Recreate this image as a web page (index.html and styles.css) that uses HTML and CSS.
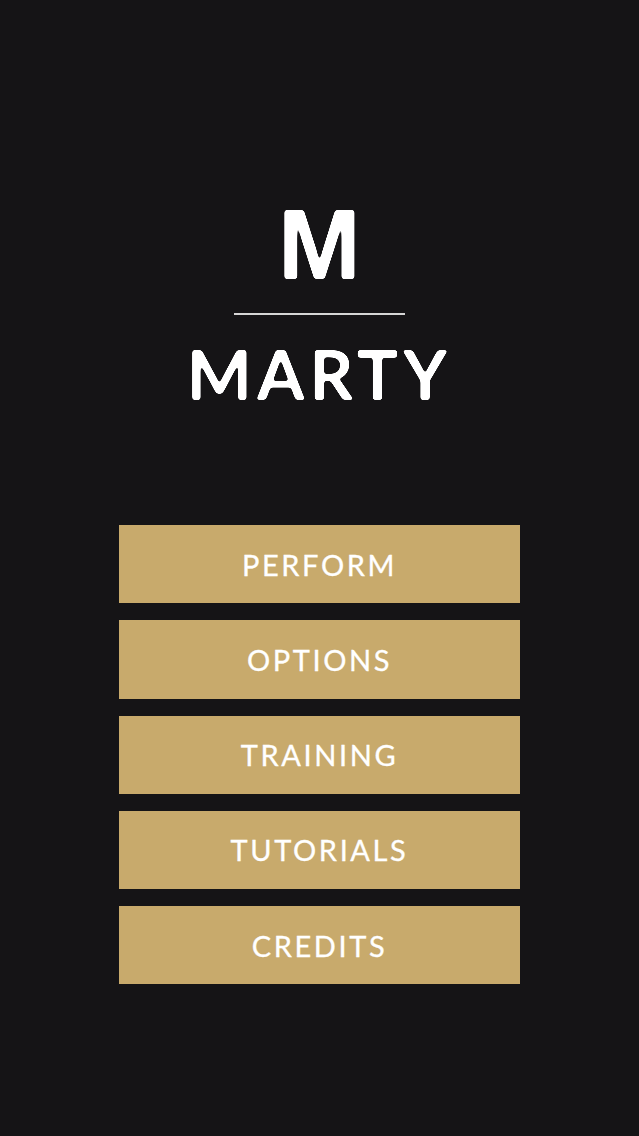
FILE: index.html
```html
<!DOCTYPE html>
<html lang="en">

<head>
  <meta charset="UTF-8">
  <meta name="viewport" content="width=device-width, initial-scale=1.0">
  <title>Marty</title>
  <link rel="stylesheet" href="styles.css">
</head>

<body>

  <!-- rounds off the corners of the logo letters -->
  <svg class="filter-defs" width="0" height="0">
    <filter id="roundCorners">
      <feGaussianBlur stdDeviation="1.8" />
      <feComponentTransfer>
        <feFuncA type="linear" slope="7" intercept="-3" />
      </feComponentTransfer>
    </filter>
  </svg>

  <div class="logo">
    <div class="logo-letter">M</div>
    <div class="logo-line"></div>
    <h1 class="logo-name">MARTY</h1>
  </div>

  <nav class="menu">
    <a class="menu-btn">PERFORM</a>
    <a class="menu-btn">OPTIONS</a>
    <a class="menu-btn">TRAINING</a>
    <a class="menu-btn">TUTORIALS</a>
    <a class="menu-btn">CREDITS</a>
  </nav>

</body>

</html>
```

FILE: styles.css
```css
body {
  font-family: 'Lato', sans-serif;
  background: #151416;
  color: white;
  margin: 0;
  height: 1136px;
  overflow: hidden;
  display: flex;
  flex-direction: column;
  align-items: center;
}

.filter-defs {
  position: absolute;
}

.logo {
  margin-top: 194px;
  display: flex;
  flex-direction: column;
  align-items: center;
}

.logo-letter {
  font-family: 'Liberation Sans', sans-serif;
  font-size: 100px;
  font-weight: 700;
  line-height: 100px;
  height: 104px;
  filter: url(#roundCorners);
}

.logo-line {
  width: 171px;
  height: 2px;
  background: #d6d6d6;
  margin-top: 15px;
}

.logo-name {
  margin: 23px 0 0;
  font-size: 69px;
  font-weight: 700;
  line-height: 72px;
  letter-spacing: 4.6px;
  filter: url(#roundCorners);
}

.menu {
  margin-top: 115px;
  display: flex;
  flex-direction: column;
  gap: 17px;
}

.menu-btn {
  width: 401px;
  height: 78.25px;
  background: #c8aa6c;
  display: flex;
  justify-content: center;
  align-items: center;
  font-size: 29px;
  letter-spacing: 2.6px;
  -webkit-text-stroke: 0.3px white;
}
```
